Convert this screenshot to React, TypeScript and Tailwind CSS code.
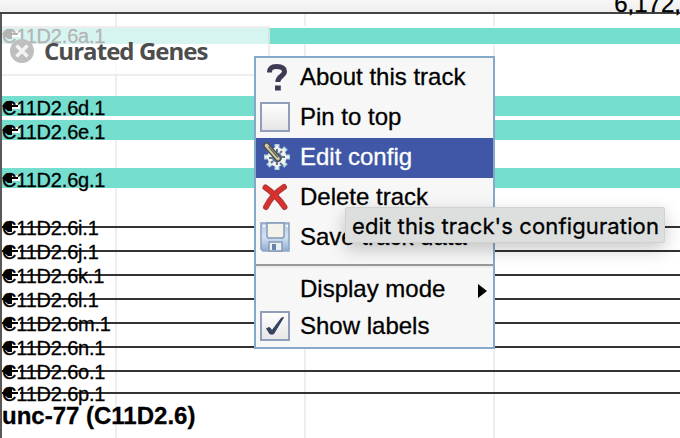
import React from "react";

type Kind = "bar" | "line";
interface Feature {
  name: string;
  kind: Kind;
  row: string;
}

// Each row's height reaches down to the top of the next feature.
const features: Feature[] = [
  { name: "C11D2.6a.1", kind: "bar", row: "h-[68px]" },
  { name: "C11D2.6d.1", kind: "bar", row: "h-6 bg-white" },
  { name: "C11D2.6e.1", kind: "bar", row: "h-12" },
  { name: "C11D2.6g.1", kind: "bar", row: "h-12" },
  { name: "C11D2.6i.1", kind: "line", row: "h-6" },
  { name: "C11D2.6j.1", kind: "line", row: "h-6" },
  { name: "C11D2.6k.1", kind: "line", row: "h-6" },
  { name: "C11D2.6l.1", kind: "line", row: "h-6" },
  { name: "C11D2.6m.1", kind: "line", row: "h-6" },
  { name: "C11D2.6n.1", kind: "line", row: "h-6" },
  { name: "C11D2.6o.1", kind: "line", row: "h-[22px]" },
  { name: "C11D2.6p.1", kind: "line", row: "h-6" },
];

function Strand({ bar, first }: { bar: boolean; first: boolean }) {
  return (
    <svg className={"absolute left-0 h-3 w-[18px] " + (first ? "top-0" : bar ? "top-1" : "top-[5px]")} viewBox="0 0 18 12">
      {bar ? <path d="M8 3h10v6H8z" fill="#fff" /> : <path d="M16 4h2v4h-2z" fill="#fff" />}
      <path d="M0 6L5 1H10V5H16V7H10V11H6Z" fill="#000" />
    </svg>
  );
}

function FeatureRow({ f, first }: { f: Feature; first: boolean }) {
  const bar = f.kind === "bar";
  return (
    <div className={"relative shrink-0 " + f.row}>
      {bar ? (
        <div className={first ? "h-4 bg-[#75decf] shadow-[0_-2px_0_#fff]" : "h-5 bg-[#75decf]"} />
      ) : (
        <div className="h-5 pt-2.5">
          <div className="h-0.5 w-full bg-[#333133]" />
        </div>
      )}
      <Strand bar={bar} first={first} />
      <span className={"absolute left-0 whitespace-nowrap text-[20px] leading-6 tracking-[-0.2px] text-black " + (first ? "-top-1" : "top-0")}>
        {f.name}
      </span>
    </div>
  );
}

function CloseIcon() {
  return (
    <svg className="size-6" viewBox="0 0 24 24">
      <circle cx="12" cy="12" r="12" fill="#bfbfbf" />
      <path d="M6.5 6.5l11 11M17.5 6.5l-11 11" stroke="#f4f4f4" strokeWidth="3.4" />
    </svg>
  );
}

function QuestionIcon() {
  return (
    <svg className="size-[30px]" viewBox="0 0 30 30">
      <path d="M9.5 10.5C9.5 6 12 4.5 16.5 4.5S24.5 6 24.5 9.5C24.5 14 17.8 14 17.8 20" fill="none" stroke="#403b54" strokeWidth="5" />
      <path d="M15 23.5h5.8v5H15z" fill="#403b54" />
    </svg>
  );
}

function CheckIcon({ checked }: { checked: boolean }) {
  return (
    <svg className="size-[30px]" viewBox="0 0 30 30">
      <defs>
        <linearGradient id="boxShade" x2="0" y2="1">
          <stop stopColor="#fff" />
          <stop offset="1" stopColor="#e5e5e6" />
        </linearGradient>
      </defs>
      <path d="M1 1h28v28H1z" fill="url(#boxShade)" stroke="#909eb9" strokeWidth="2" />
      {checked && <path d="M6.5 17.5l3-1 2.5 3L21.5 7l2-.5L13.5 23h-3.5z" fill="#35435f" stroke="#35435f" />}
    </svg>
  );
}

function GearIcon() {
  return (
    <svg className="size-[30px]" viewBox="0 0 30 30">
      <g stroke="#a9cfe0" strokeWidth="5">
        <path d="M17 2v26M4 15h26M8 6l18 18M26 6L8 24" />
      </g>
      <circle cx="17" cy="15" r="9.5" fill="#f1f3ea" />
      <path d="M17 3v24M5 15h24M9 7l16 16M25 7L9 23" stroke="#f1f3ea" strokeWidth="2.5" />
      <circle cx="17" cy="15.5" r="5" fill="#58759f" />
      <path d="M17 10v-3M12 16H9M22 15h3M17 20v3M20 11l2-2M13 19l-2 2" stroke="#58759f" strokeWidth="2" />
      <path d="M6.5 3.5L18 16.5" stroke="#4b4e51" strokeWidth="6.5" strokeLinecap="round" />
      <path d="M6.5 3.5L18 16.5" stroke="#d2cda9" strokeWidth="3.6" strokeLinecap="round" />
      <path d="M8.5 4.5L18 15.5" stroke="#696855" strokeWidth="1.5" />
      <path d="M20 21l3 3" stroke="#58759f" strokeWidth="2" />
    </svg>
  );
}

function DeleteIcon() {
  return (
    <svg className="size-[30px]" viewBox="0 0 30 30">
      <path d="M5.5 5.5C11 9 20 18 24.5 25M24 5C16 10 10 17 6 25" fill="none" stroke="#b23a3a" strokeWidth="6" strokeLinecap="round" />
      <path d="M5.5 5.5C11 9 20 18 24.5 25M24 5C16 10 10 17 6 25" fill="none" stroke="#d8302f" strokeWidth="3.8" strokeLinecap="round" />
    </svg>
  );
}

function SaveIcon() {
  return (
    <svg className="size-[30px]" viewBox="0 0 30 30">
      <defs>
        <linearGradient id="disk" x2="0" y2="1">
          <stop stopColor="#b9cbe0" />
          <stop offset=".5" stopColor="#d3e2f2" />
          <stop offset="1" stopColor="#8eacd4" />
        </linearGradient>
      </defs>
      <path d="M1 1h28v28H3l-2-2z" fill="url(#disk)" stroke="#8ea5c4" strokeWidth="1.6" />
      <path d="M7 1h17v13q0 2-2 2H9q-2 0-2-2z" fill="#f3f3ec" stroke="#8198b7" strokeWidth="1.4" />
      <path d="M3 4h2M26 4h2" stroke="#fff" strokeWidth="2" />
      <path d="M9 20h13v9H9z" fill="#eef0ef" stroke="#8198b7" strokeWidth="1.4" />
      <path d="M12 22h4v6h-4z" fill="#6884ad" />
    </svg>
  );
}

function MenuItem({ icon, label, className }: { icon?: React.ReactNode; label: string; className: string }) {
  return (
    <div className={"flex shrink-0 items-center " + className}>
      <div className="ml-1 size-[30px]">{icon}</div>
      <span className="ml-[10px] whitespace-nowrap">{label}</span>
    </div>
  );
}

export default function App() {
  return (
    <div className="relative flex h-[438px] w-[680px] flex-col overflow-hidden bg-white font-['Liberation_Sans',Arial,sans-serif] text-black [-webkit-text-stroke:0.3px]">
      <header className="flex h-3.5 shrink-0 justify-end border-b-2 border-[#444344] bg-linear-to-b from-[#f7f7f7] to-[#eeeeee]">
        <span className="relative -top-2 mr-[-1px] text-[24px] leading-6">6,172,</span>
      </header>

      <main className="relative flex min-h-0 flex-1 flex-col border-l-2 border-[#58575a] pt-3.5">
        <div className="absolute inset-y-0 left-[113px] w-0.5 bg-[#eeeeee]" />
        <div className="absolute inset-y-0 left-[302px] w-0.5 bg-[#eeeeee]" />
        <div className="absolute inset-y-0 left-[491px] w-0.5 bg-[#eeeeee]" />
        {features.map((f, i) => (
          <FeatureRow key={f.name} f={f} first={i === 0} />
        ))}
        <strong className="absolute left-0 top-[388px] whitespace-nowrap text-[24px] leading-7">unc-77 (C11D2.6)</strong>
      </main>

      <div className="absolute left-0.5 top-[26px] flex h-[50px] w-[268px] items-center border-y-2 border-r-2 border-[#bbbbbb]/25 bg-white/70 pl-2">
        <CloseIcon />
        <span className="ml-[10px] whitespace-nowrap font-['Open_Sans',sans-serif] text-[24px] font-bold leading-7 tracking-[-0.95px] text-[#4d4d4d] [-webkit-text-stroke:0]">Curated Genes</span>
      </div>

      <div className="absolute left-[254px] top-[56px] flex h-[293px] w-[241px] flex-col border-2 border-[#86a9ca] bg-[#f7f7f7] text-[24px] leading-7">
        <MenuItem className="h-10 pb-0.5" icon={<QuestionIcon />} label="About this track" />
        <MenuItem className="h-10 pb-0.5" icon={<CheckIcon checked={false} />} label="Pin to top" />
        <MenuItem className="h-10 bg-[#3f57a6] pb-0.5 text-white" icon={<GearIcon />} label="Edit config" />
        <MenuItem className="h-10 pb-0.5" icon={<DeleteIcon />} label="Delete track" />
        <MenuItem className="h-10 pb-0.5" icon={<SaveIcon />} label="Save track data" />
        <div className="mt-1.5 h-1 shrink-0 border-b-2 border-t-2 border-b-[#ededed] border-t-[#999999]" />
        <div className="flex h-[39px] shrink-0 items-center pt-0.5">
          <MenuItem className="h-9" label="Display mode" />
          <svg className="ml-auto mr-[5px] mt-1 h-4 w-[10px]" viewBox="0 0 10 16">
            <path d="M0 1L9 8L0 15Z" fill="#000" />
          </svg>
        </div>
        <MenuItem className="h-10 pb-0.5" icon={<CheckIcon checked />} label="Show labels" />
      </div>

      <div className="absolute left-[345px] top-[207px] flex h-9 w-[320px] items-center rounded-[2px] border border-[#d0d1d0] bg-[#dddfde] pl-1.5 pt-0.5 font-['Inter',sans-serif] text-[22px] leading-7 tracking-[0.12px] shadow-[0_6px_18px_rgba(0,0,0,0.22)]">
        <span className="whitespace-nowrap">edit this track's configuration</span>
      </div>
    </div>
  );
}
